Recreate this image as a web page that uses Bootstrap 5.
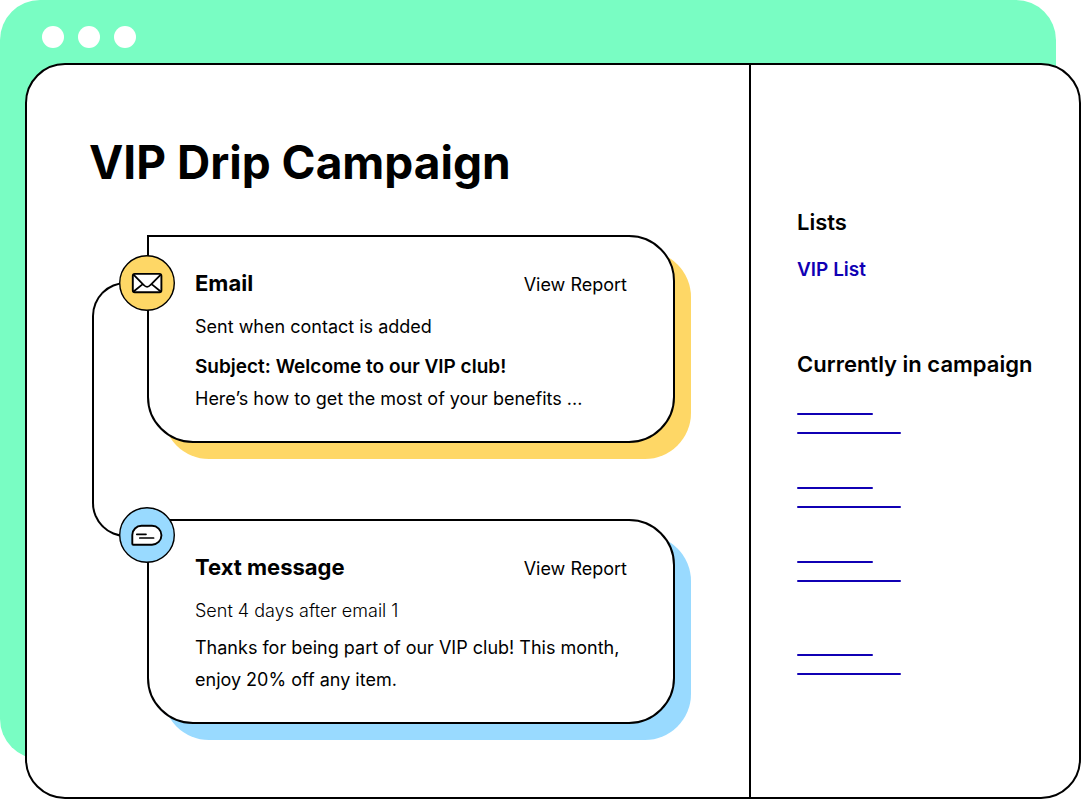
<!DOCTYPE html>
<html lang="en">
<head>
<meta charset="utf-8">
<meta name="viewport" content="width=device-width, initial-scale=1">
<title>VIP Drip Campaign</title>
<link href="https://cdn.jsdelivr.net/npm/bootstrap@5.3.0/dist/css/bootstrap.min.css" rel="stylesheet">
<style>
  body { font-family: Inter, "Liberation Sans", sans-serif; font-size: 18px; line-height: 32px; color: #000; background: #fff; }
  a { text-decoration: none; }
  h1 { font-size: 46px; line-height: 56px; font-weight: 700; margin-bottom: 45px; padding-left: 62px; }
  h2 { font-size: 22px; line-height: 32px; font-weight: 600; margin: 0; }
  .stage { padding: 63px 0 1px 25px; }
  .backdrop { inset: 0 25px 41px 0; background: #79fdc3; border-radius: 40px; padding: 26px 0 0 42px; gap: 14px; }
  .dot { width: 22px; height: 22px; }
  .app-window { border: 2px solid #000; border-radius: 40px; background: #fff; }
  .flow { padding: 69px 0 73px; }
  .steps { margin: 0 74px 0 120px; gap: 76px; }
  .connector { left: -55px; top: 47px; bottom: 187px; width: 40px; border: 2px solid #000; border-right: 0; border-radius: 34px 0 0 34px; }
  .step { border: 2px solid #000; border-radius: 0 46px 46px 46px; background: #fff; padding: 30px 46px 26px; box-shadow: 16px 16px 0 var(--tone); }
  .step p { margin: 0; }
  .step h2 { font-weight: 700; }
  .step-head { margin-bottom: 10px; }
  .step-email { --tone: #fed766; }
  .step-text { --tone: #99daff; }
  .step-icon { left: -30px; top: 18px; }
  .step-text .step-icon { top: -14px; }
  .step-email .timing { margin-bottom: 8px; }
  .step-text .timing { margin-bottom: 5px; font-weight: 300; }
  .subject { font-size: 19px; font-weight: 600; }
  .side { padding: 141px 40px 73px 46px; }
  .side a { color: #1000b4; font-size: 19px; font-weight: 600; }
  .side .group-lists { gap: 16px; margin-bottom: 62px; }
  .side ul { margin: 33px 0 0; }
  .side li { margin-bottom: 53px; }
  .side li:nth-child(3) { margin-bottom: 72px; }
  .side li:last-child { margin-bottom: 0; }
  .stroke { height: 2px; width: 76px; background: #1000b4; border-radius: 1px; }
  .stroke + .stroke { width: 104px; margin-top: 17px; }
  @media (min-width: 992px) {
    .side { width: 330px; border-left: 2px solid #000; }
  }
</style>
</head>
<body>
<div class="stage position-relative">
  <div class="backdrop position-absolute d-flex align-items-start">
    <span class="dot rounded-circle bg-white"></span>
    <span class="dot rounded-circle bg-white"></span>
    <span class="dot rounded-circle bg-white"></span>
  </div>
  <div class="app-window position-relative d-flex flex-column flex-lg-row">
    <main class="flow flex-fill">
      <h1>VIP Drip Campaign</h1>
      <div class="steps position-relative d-flex flex-column">
        <div class="connector position-absolute"></div>
        <section class="step step-email position-relative">
          <svg class="step-icon position-absolute" width="56" height="56" viewBox="0 0 56 56" fill="none" stroke="#000" aria-hidden="true">
            <circle cx="28" cy="28" r="27.3" fill="#fed766" stroke-width="1.4"/>
            <rect x="13.8" y="18.9" width="28.6" height="18.4" rx="2" fill="#fff" stroke-width="1.9"/>
            <path d="M14.3 19.4 24.8 30q3.3 3.6 6.6 0L42 19.4M14.3 36.8l8.8-7.2M42 36.8l-8.8-7.2" stroke-width="1.8"/>
          </svg>
          <div class="step-head d-flex flex-wrap justify-content-between align-items-baseline">
            <h2>Email</h2>
            <a href="#" class="text-black">View Report</a>
          </div>
          <p class="timing">Sent when contact is added</p>
          <p class="subject">Subject: Welcome to our VIP club!</p>
          <p>Here’s how to get the most of your benefits ...</p>
        </section>
        <section class="step step-text position-relative">
          <svg class="step-icon position-absolute" width="56" height="56" viewBox="0 0 56 56" fill="none" stroke="#000" aria-hidden="true">
            <circle cx="28" cy="28" r="27.3" fill="#99daff" stroke-width="1.4"/>
            <path d="M22.5 18.8H33a9.3 9.3 0 0 1 0 18.9H14.3q-1 0-1-1V28a9.2 9.2 0 0 1 9.2-9.2Z" fill="#fff" stroke-width="1.9"/>
            <path d="M17.8 27.3H27M20.8 31H34.6" stroke-width="1.7" stroke-linecap="round"/>
          </svg>
          <div class="step-head d-flex flex-wrap justify-content-between align-items-baseline">
            <h2>Text message</h2>
            <a href="#" class="text-black">View Report</a>
          </div>
          <p class="timing">Sent 4 days after email 1</p>
          <p>Thanks for being part of our VIP club! This month, enjoy 20% off any item.</p>
        </section>
      </div>
    </main>
    <aside class="side flex-shrink-0">
      <div class="group-lists d-flex flex-column">
        <h2>Lists</h2>
        <a href="#">VIP List</a>
      </div>
      <h2>Currently in campaign</h2>
      <ul class="list-unstyled">
        <li><div class="stroke"></div><div class="stroke"></div></li>
        <li><div class="stroke"></div><div class="stroke"></div></li>
        <li><div class="stroke"></div><div class="stroke"></div></li>
        <li><div class="stroke"></div><div class="stroke"></div></li>
      </ul>
    </aside>
  </div>
</div>
<script src="https://cdn.jsdelivr.net/npm/bootstrap@5.3.0/dist/js/bootstrap.bundle.min.js"></script>
</body>
</html>
